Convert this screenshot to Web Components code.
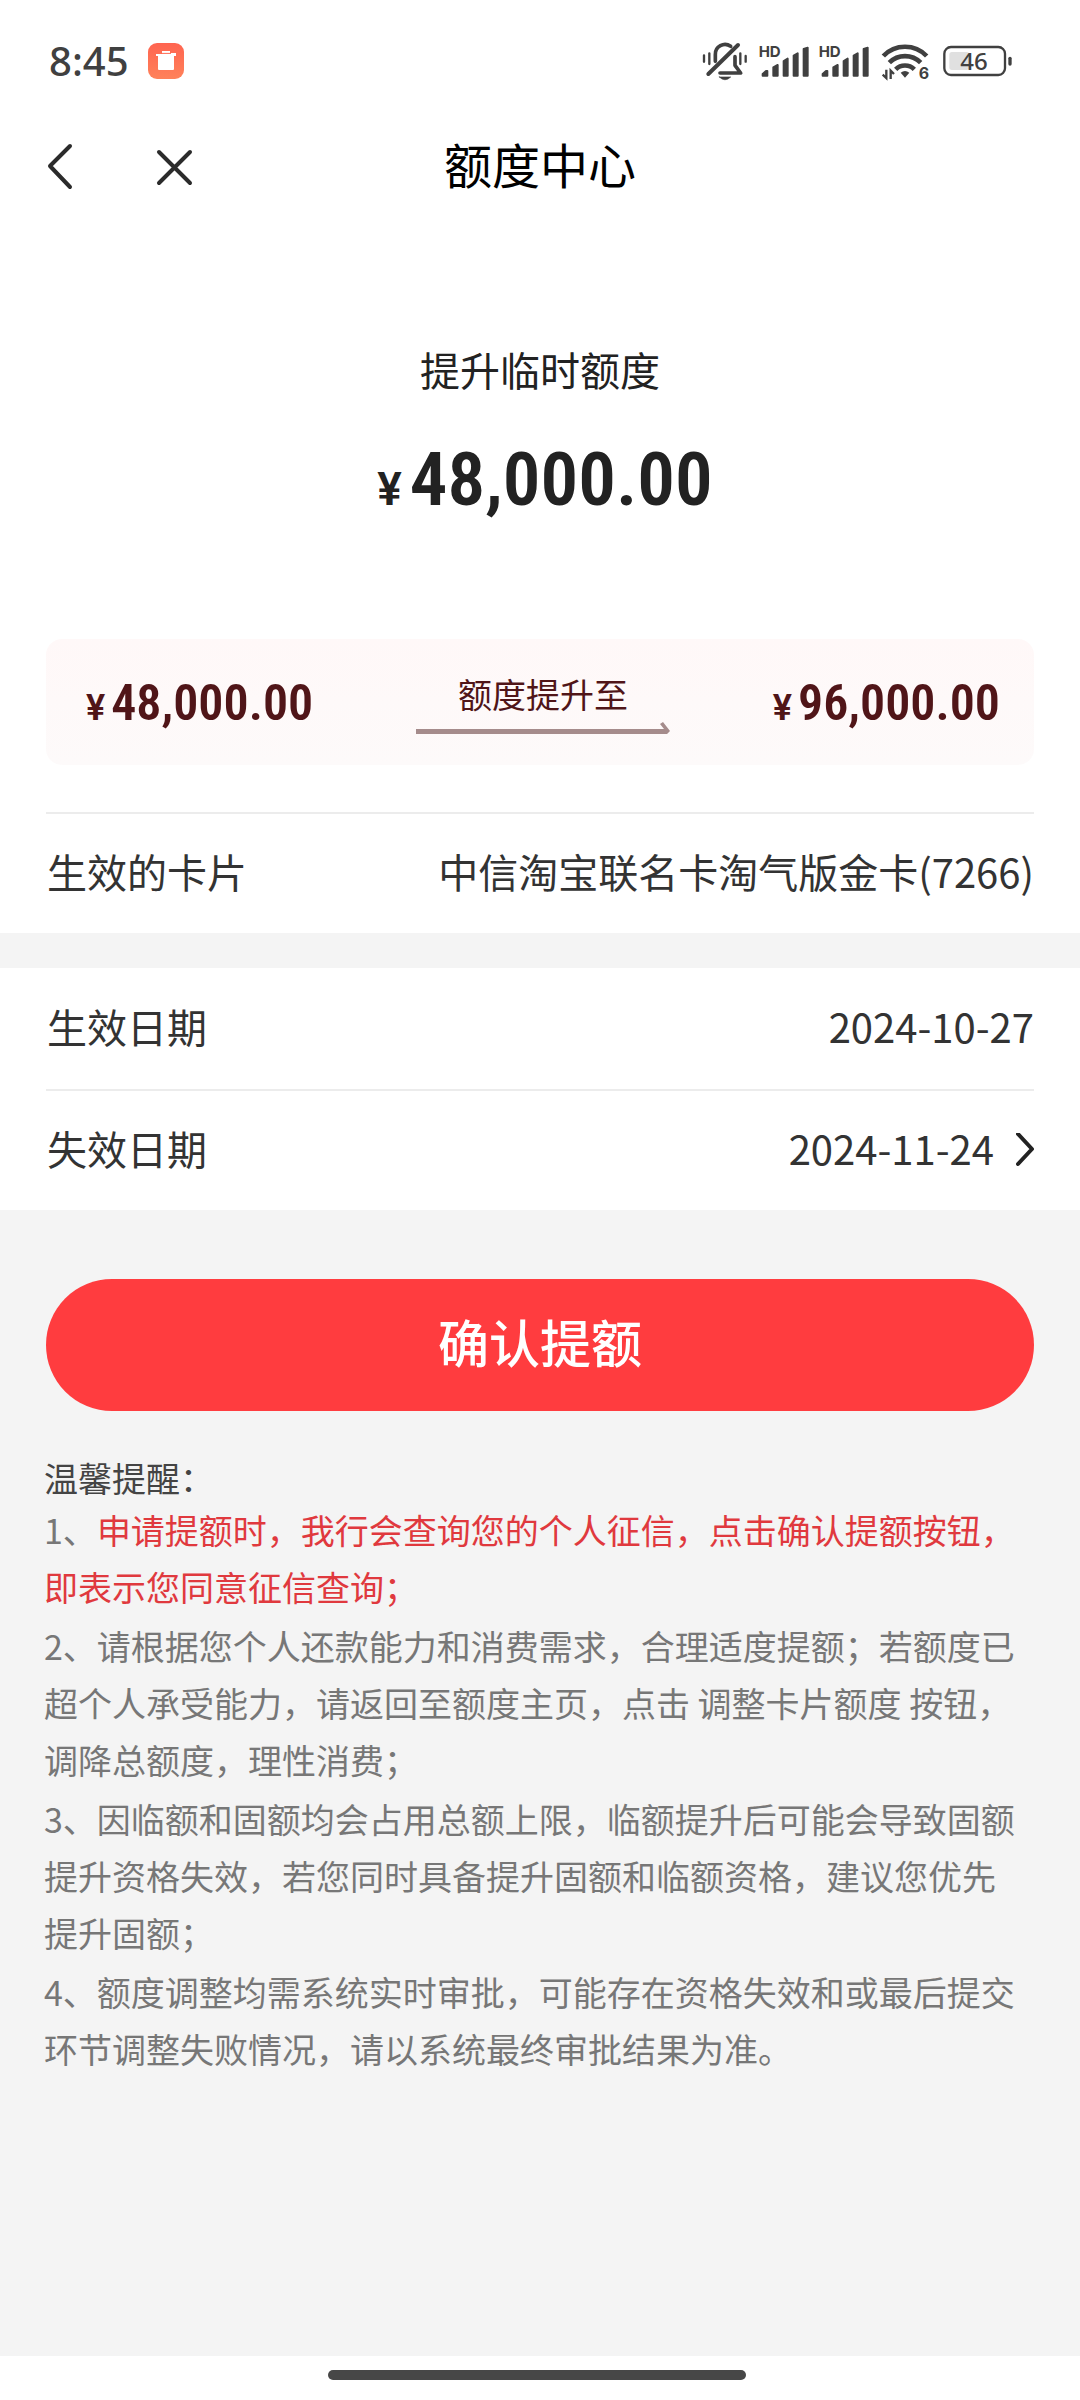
<!DOCTYPE html>
<html lang="zh-CN">
<head>
<meta charset="utf-8">
<meta name="viewport" content="width=device-width, initial-scale=1">
<title>额度中心</title>
<style>
  html, body { margin: 0; }
  body {
    --edge: 46px;
    --ink: #333;
    --page: #f4f4f4;
    --maroon: #501518;
    --red: #ff3c3f;
    --figures: "Roboto Condensed", "Roboto", "Noto Sans CJK SC", sans-serif;
    font-family: "Noto Sans CJK SC", sans-serif;
    color: var(--ink);
    background: var(--page);
  }
</style>
</head>
<body>
<limit-page></limit-page>

<script>
const define = (name, html) => {
  const template = document.createElement('template');
  template.innerHTML = html;
  customElements.define(name, class extends HTMLElement {
    constructor() {
      super();
      this.attachShadow({ mode: 'open' }).append(template.content.cloneNode(true));
    }
  });
};

define('signal-bars', `
  <style>:host { display: block; width: 52px; height: 42px; } svg { display: block; }</style>
  <svg width="52" height="42" viewBox="0 0 156 126" fill="#404040" stroke="#404040" stroke-width="6" stroke-linejoin="round" aria-hidden="true">
    <path d="M14 107V102L24 93H28V107ZM46 107V82L59 75V107ZM77 107V63L89 56V107ZM107 107V47L119 40V107ZM137 107V27L149 23V107Z"/>
    <text x="2" y="50" font-family="Inter, sans-serif" font-size="45" font-weight="700" stroke="none">HD</text>
  </svg>`);

define('status-bar', `
  <style>
    :host { display: flex; align-items: center; justify-content: space-between; height: 122px; padding: 0 66px 0 49px; }
    .side { display: flex; align-items: center; }
    .left { gap: 19px; }
    .right { gap: 8px; }
    time { font: 500 40px/48px "Noto Sans", sans-serif; color: #404040; }
    svg { display: block; }
  </style>
  <div class="side left">
    <time>8:45</time>
    <svg width="36" height="36" viewBox="0 0 36 36" aria-hidden="true">
      <defs><linearGradient id="g" x1="0" y1="0" x2="0" y2="1"><stop offset="0" stop-color="#ff6450"/><stop offset="1" stop-color="#ff825a"/></linearGradient></defs>
      <rect width="36" height="36" rx="9" fill="url(#g)"/>
      <path d="M14 8H22V10H28V13H26V26Q26 27 25 27H11Q10 27 10 26V13H8V11H14Z" fill="#fff"/>
      <path d="M13 10.4H23" stroke="#ff6a52" stroke-width="1"/>
    </svg>
  </div>
  <div class="side right">
    <svg width="48" height="42" viewBox="0 0 144 126" fill="none" stroke="#404040" stroke-linecap="round" stroke-linejoin="round" aria-hidden="true">
      <path d="M19 102L108 15" stroke-width="12"/>
      <path d="M40 64V44A29 29 0 0 1 86 19" stroke-width="11"/>
      <path d="M99 50V76L116 99H54" stroke-width="11"/>
      <path d="M52 111H86Q69 128 52 111Z" fill="#404040" stroke-width="2"/>
      <path d="M6 46V65M22 40V72M115 40V72M131 48V65" stroke-width="7"/>
    </svg>
    <signal-bars></signal-bars>
    <signal-bars></signal-bars>
    <svg width="52" height="42" viewBox="0 0 156 126" fill="none" stroke="#404040" stroke-width="14" aria-hidden="true">
      <path d="M16 48A90 90 0 0 1 146 48M34 68A66 66 0 0 1 128 68M53 88A40 40 0 0 1 109 88"/>
      <path d="M68 98Q81 88 94 98L81 113Z" fill="#404040" stroke="none"/>
      <path d="M25 89V114L14 104M38 117V92L48 102" stroke-width="7"/>
      <text x="122" y="117" font-family="Inter, sans-serif" font-size="48" font-weight="700" fill="#404040" stroke="none">6</text>
    </svg>
    <svg width="76" height="42" viewBox="0 0 228 126" aria-hidden="true">
      <rect x="34" y="36" width="60" height="54" rx="8" fill="#e0e0e0"/>
      <rect x="19" y="21" width="182" height="84" rx="20" fill="none" stroke="#404040" stroke-width="7"/>
      <rect x="211" y="50" width="10" height="27" rx="5" fill="#404040"/>
      <text x="108" y="89" text-anchor="middle" font-family="Noto Sans, sans-serif" font-size="72" font-weight="500" fill="#404040">46</text>
    </svg>
  </div>`);

define('nav-bar', `
  <style>
    :host { display: grid; grid-template-columns: 1fr auto 1fr; align-items: center; height: 88px; padding: 0 var(--edge); }
    .actions { display: flex; gap: 72px; }
    button { appearance: none; border: 0; padding: 0; background: none; display: block; }
    svg { display: block; }
    h1 { margin: 0; padding-bottom: 6px; font-size: 48px; font-weight: 400; line-height: 72px; color: #000; }
  </style>
  <div class="actions">
    <button aria-label="返回"><svg width="36" height="48" viewBox="0 0 36 48" fill="none" stroke="#2b2b2b" stroke-width="4" stroke-linecap="round" stroke-linejoin="round"><path d="M24 4L4 24L24 45"/></svg></button>
    <button aria-label="关闭"><svg width="40" height="48" viewBox="0 0 40 48" fill="none" stroke="#2b2b2b" stroke-width="4" stroke-linecap="round"><path d="M5 10L36 41M36 10L5 41"/></svg></button>
  </div>
  <h1><slot></slot></h1>`);

define('money-amount', `
  <style>
    :host { display: inline-flex; align-items: baseline; gap: 6px; font-family: var(--figures); font-weight: 600; font-size: 50px; line-height: 60px; }
    .unit { font-family: Roboto, sans-serif; font-size: 36px; }
    :host([large]) { font-size: 75px; line-height: 92px; gap: 8px; padding-left: 10px; }
    :host([large]) .unit { font-size: 46px; }
  </style>
  <span class="unit">¥</span><span><slot></slot></span>`);

define('limit-hero', `
  <style>
    :host { display: flex; flex-direction: column; align-items: center; gap: 34px; padding: 129px var(--edge) 104px; color: #222; }
    h2 { margin: 0; font-size: 40px; font-weight: 400; line-height: 60px; }
  </style>
  <h2><slot name="title"></slot></h2>
  <slot></slot>`);

define('limit-change', `
  <style>
    :host { display: flex; align-items: center; justify-content: space-between; box-sizing: border-box; height: 126px; margin: 0 var(--edge) 47px; padding: 6px 34px 0 40px; border-radius: 16px; background: linear-gradient(#fff8f8, #fdfafa); color: var(--maroon); }
    .step { display: flex; flex-direction: column; align-items: center; gap: 4px; padding-bottom: 4px; font-size: 34px; line-height: 48px; }
    svg { display: block; }
  </style>
  <slot name="from"></slot>
  <div class="step"><span><slot></slot></span>
    <svg width="254" height="14" viewBox="0 0 254 14" aria-hidden="true"><path d="M0 7H248L244 2L247 0L254 9L251 12H0Z" fill="#a58c8c"/></svg>
  </div>
  <slot name="to"></slot>`);

define('info-row', `
  <style>
    :host { display: block; padding: 0 var(--edge); }
    .row { display: flex; align-items: center; justify-content: space-between; box-sizing: border-box; height: 121px; padding-left: 1px; font-size: 40px; line-height: 60px; }
    .text { padding-bottom: 6px; }
    :host([lined]) .row { border-top: 2px solid #ececec; }
    .value { display: flex; align-items: center; gap: 22px; }
    svg { display: none; }
    :host([link]) svg { display: block; }
  </style>
  <div class="row"><span class="text"><slot name="label"></slot></span>
    <span class="value"><span class="text"><slot></slot></span>
      <svg width="18" height="36" viewBox="0 0 18 36" fill="none" stroke="#222" stroke-width="4" stroke-linecap="round" stroke-linejoin="round" aria-hidden="true"><path d="M2 1L16 16L2 31"/></svg>
    </span>
  </div>`);

define('confirm-button', `
  <style>
    :host { display: block; margin: 69px var(--edge) 0; }
    button { appearance: none; display: block; width: 100%; height: 132px; border: 0; border-radius: 66px; padding: 0 0 8px; background: var(--red); color: #fff; font-family: inherit; font-size: 51px; font-weight: 500; line-height: 76px; }
  </style>
  <button type="button"><slot></slot></button>`);

define('kind-tips', `
  <style>
    :host { display: block; padding: 44px 56px 0 44px; font-size: 34px; }
    h3 { margin: 0; font-size: 34px; font-weight: 400; line-height: 46px; color: #444; }
    .list { display: flex; flex-direction: column; gap: 2px; line-height: 57px; color: #777; }
  </style>
  <h3><slot name="title"></slot></h3>
  <div class="list"><slot></slot></div>`);

define('home-indicator', `
  <style>
    :host { display: flex; justify-content: center; padding: 14px 6px 20px 0; background: #fff; }
    i { display: block; width: 418px; height: 10px; border-radius: 5px; background: #474747; }
  </style>
  <i></i>`);

define('limit-page', `
  <style>
    :host { display: flex; flex-direction: column; min-height: 100vh; }
    .panel { background: #fff; }
    .panel + .panel { margin-top: 35px; }
    main { flex: 1; }
    p { margin: 0; }
    em { font-style: normal; color: #e0393e; }
  </style>
  <div class="panel">
    <status-bar></status-bar>
    <nav-bar>额度中心</nav-bar>
    <limit-hero><span slot="title">提升临时额度</span><money-amount large>48,000.00</money-amount></limit-hero>
    <limit-change><money-amount slot="from">48,000.00</money-amount>额度提升至<money-amount slot="to">96,000.00</money-amount></limit-change>
    <info-row lined><span slot="label">生效的卡片</span>中信淘宝联名卡淘气版金卡(7266)</info-row>
  </div>
  <div class="panel">
    <info-row><span slot="label">生效日期</span>2024-10-27</info-row>
    <info-row lined link><span slot="label">失效日期</span>2024-11-24</info-row>
  </div>
  <main>
    <confirm-button>确认提额</confirm-button>
    <kind-tips>
      <span slot="title">温馨提醒：</span>
      <p>1、<em>申请提额时，我行会查询您的个人征信，点击确认提额按钮，<br>即表示您同意征信查询；</em></p>
      <p>2、请根据您个人还款能力和消费需求，合理适度提额；若额度已超个人承受能力，请返回至额度主页，点击 调整卡片额度 按钮，调降总额度，理性消费；</p>
      <p>3、因临额和固额均会占用总额上限，临额提升后可能会导致固额提升资格失效，若您同时具备提升固额和临额资格，建议您优先提升固额；</p>
      <p>4、额度调整均需系统实时审批，可能存在资格失效和或最后提交环节调整失败情况，请以系统最终审批结果为准。</p>
    </kind-tips>
  </main>
  <home-indicator></home-indicator>`);
</script>
</body>
</html>
